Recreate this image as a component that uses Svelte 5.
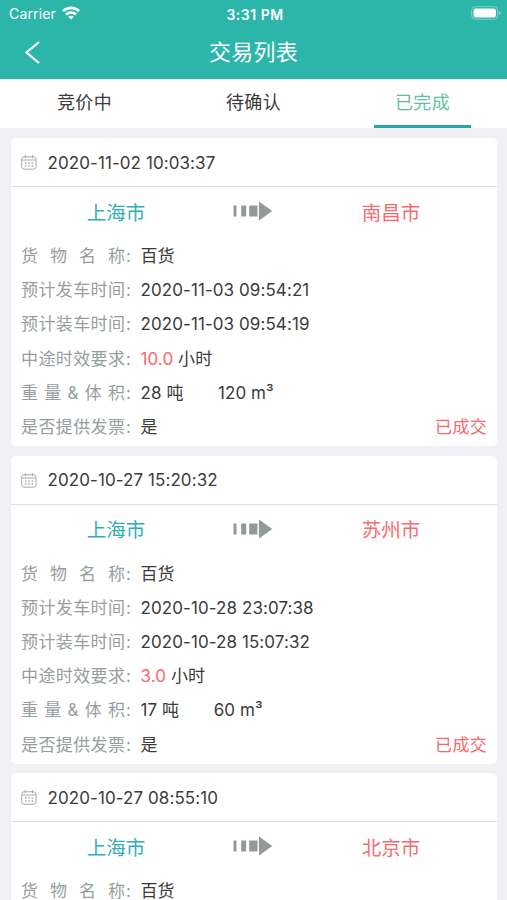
<script>
  const tabs = [
    { name: '竞价中', active: false },
    { name: '待确认', active: false },
    { name: '已完成', active: true }
  ];

  const orders = [
    {
      created: '2020-11-02 10:03:37', from: '上海市', to: '南昌市', goods: '百货',
      detail: {
        depart: '2020-11-03 09:54:21', load: '2020-11-03 09:54:19',
        hours: '10.0', weight: '28 吨', volume: '120 m³', invoice: '是', status: '已成交'
      }
    },
    {
      created: '2020-10-27 15:20:32', from: '上海市', to: '苏州市', goods: '百货',
      detail: {
        depart: '2020-10-28 23:07:38', load: '2020-10-28 15:07:32',
        hours: '3.0', weight: '17 吨', volume: '60 m³', invoice: '是', status: '已成交'
      }
    },
    { created: '2020-10-27 08:55:10', from: '上海市', to: '北京市', goods: '百货' }
  ];
</script>

{#snippet label(text)}
  <span class="label"><span class="chars">{#each text as ch}<span>{ch}</span>{/each}</span><span class="colon">:</span></span>
{/snippet}

<div class="screen">
  <header>
    <div class="status">
      <div class="carrier">
        <span>Carrier</span>
        <svg width="18" height="14" viewBox="0 0 18 14" fill="none" stroke="#fff" stroke-width="2.7">
          <path d="M1 5.100C5.600.7 12.400.7 17 5.100" />
          <path d="M4 8.600c2.900-2.700 7.100-2.700 10 0" />
          <path d="M9 13.600 6.200 10.800c1.600-1.400 4-1.400 5.600 0z" fill="#fff" stroke="none" />
        </svg>
      </div>
      <span class="clock">3:31 PM</span>
      <svg class="battery" width="30" height="14" viewBox="0 0 30 14">
        <rect x=".7" y=".7" width="26" height="12.6" rx="3.8" fill="none" stroke="#fff" stroke-opacity=".4" />
        <rect x="2.5" y="2.5" width="22.4" height="9" rx="2.2" fill="#fff" />
        <path d="M28 5v4c1.800-.7 1.800-3.300 0-4z" fill="#fff" fill-opacity=".5" />
      </svg>
    </div>
    <div class="nav">
      <svg class="back" width="16" height="23" viewBox="0 0 16 23" fill="none" stroke="#fff" stroke-width="2.2">
        <path d="M15 1 2.500 11.500 15 22" />
      </svg>
      <h1>交易列表</h1>
    </div>
  </header>

  <nav class="tabs">
    {#each tabs as tab}
      <div class="tab" class:active={tab.active}><span>{tab.name}</span></div>
    {/each}
  </nav>

  <main>
    {#each orders as o}
      <article>
        <div class="head">
          <svg width="16" height="15" viewBox="0 0 16 15" fill="none" stroke="#a5acac" stroke-width="1">
            <rect x=".7" y="1.800" width="14.400" height="12.400" rx="2.300" />
            <path d="M1 5h14M4.300 0v3.200M11.500 0v3.200" />
            <path d="M4 8h8.500M4 11h8.500" stroke-width="1.500" stroke-dasharray="1.500 1.800" />
          </svg>
          <span>{o.created}</span>
        </div>
        <div class="route">
          <span class="from">{o.from}</span>
          <svg width="40" height="20" viewBox="0 0 40 20" fill="#929999">
            <path d="M.5 4.500h3v11h-3zM8.200 4.500h5v11h-5zM16.200 4.500h8.300v11h-8.300zM26 .5 39.300 10 26 19.500z" />
          </svg>
          <span class="to">{o.to}</span>
        </div>
        <div class="rows">
          <div class="row">{@render label('货物名称')}<span>{o.goods}</span></div>
          {#if o.detail}
            <div class="row">{@render label('预计发车时间')}<span>{o.detail.depart}</span></div>
            <div class="row">{@render label('预计装车时间')}<span>{o.detail.load}</span></div>
            <div class="row">{@render label('中途时效要求')}<span><em>{o.detail.hours}</em> 小时</span></div>
            <div class="row">{@render label('重量&体积')}<span>{o.detail.weight}</span><span class="volume">{o.detail.volume}</span></div>
            <div class="row">{@render label('是否提供发票')}<span>{o.detail.invoice}</span><span class="deal">{o.detail.status}</span></div>
          {/if}
        </div>
      </article>
    {/each}
  </main>
</div>

<style>
  .screen {
    width: 507px;
    height: 900px;
    overflow: hidden;
    background: #f0f0f5;
    color: #3b3b3b;
    font-family: Inter, "Noto Sans CJK SC", sans-serif;
    font-size: 17px;
    letter-spacing: 0.08px;
  }
  svg { display: block; flex: none; }
  header { height: 79px; background: #2bb6a9; color: #fff; }
  .status {
    height: 28px;
    padding: 0 6px 0 9px;
    display: grid;
    grid-template-columns: 1fr auto 1fr;
    align-items: center;
    font-size: 14px;
  }
  .carrier { display: flex; align-items: center; gap: 6px; margin-top: -1px; letter-spacing: 0.15px; }
  .carrier svg { margin-top: -1px; }
  .clock { font-weight: 600; font-size: 14px; letter-spacing: 0.5px; }
  .battery { justify-self: end; margin-top: -2px; }
  .nav {
    height: 48px;
    display: grid;
    grid-template-columns: 1fr auto 1fr;
    align-items: center;
    padding: 0 24px;
  }
  h1 {
    margin: 0;
    font-size: 22px;
    line-height: 30px;
    font-weight: 400;
    letter-spacing: 0.3px;
  }
  .tabs { display: flex; height: 49px; background: #fff; }
  .tab {
    flex: 1;
    display: flex;
    justify-content: center;
    font-size: 18px;
    line-height: 48px;
    letter-spacing: 0.3px;
  }
  .tab span { width: 97px; height: 49px; text-align: center; box-sizing: border-box; }
  .active { color: #60c29b; }
  .active span { border-bottom: 3.500px solid #26a4a8; }
  main { padding: 10px 10px 0 11px; display: flex; flex-direction: column; gap: 9.700px; }
  article { height: 308px; flex: none; background: #fff; border-radius: 5px; overflow: hidden; }
  article:last-child { height: 152px; }
  .head {
    height: 49px;
    box-sizing: border-box;
    border-bottom: 1px solid #dedfe2;
    display: flex;
    align-items: center;
    gap: 10.500px;
    padding: 1px 10px 0;
  }
  .route {
    height: 51px;
    padding-bottom: 3px;
    box-sizing: border-box;
    display: grid;
    grid-template-columns: 210px 1fr 212px;
    align-items: center;
    justify-items: center;
    font-size: 19.500px;
    letter-spacing: 0;
  }
  .from { color: #30afb3; }
  .to { color: #f76c70; }
  .rows { padding: 1px 10px 0; }
  .row { display: flex; height: 34.200px; line-height: 34.200px; white-space: pre; }
  .label { width: 110px; margin-right: 9.500px; display: flex; color: #979e9e; letter-spacing: 0; }
  .chars { width: 104px; display: flex; justify-content: space-between; }
  .colon { margin-left: 1px; }
  em { font-style: normal; color: #f9686e; }
  .volume { margin-left: 34.500px; }
  .deal { margin-left: auto; color: #f9686e; letter-spacing: 0.3px; }
</style>
